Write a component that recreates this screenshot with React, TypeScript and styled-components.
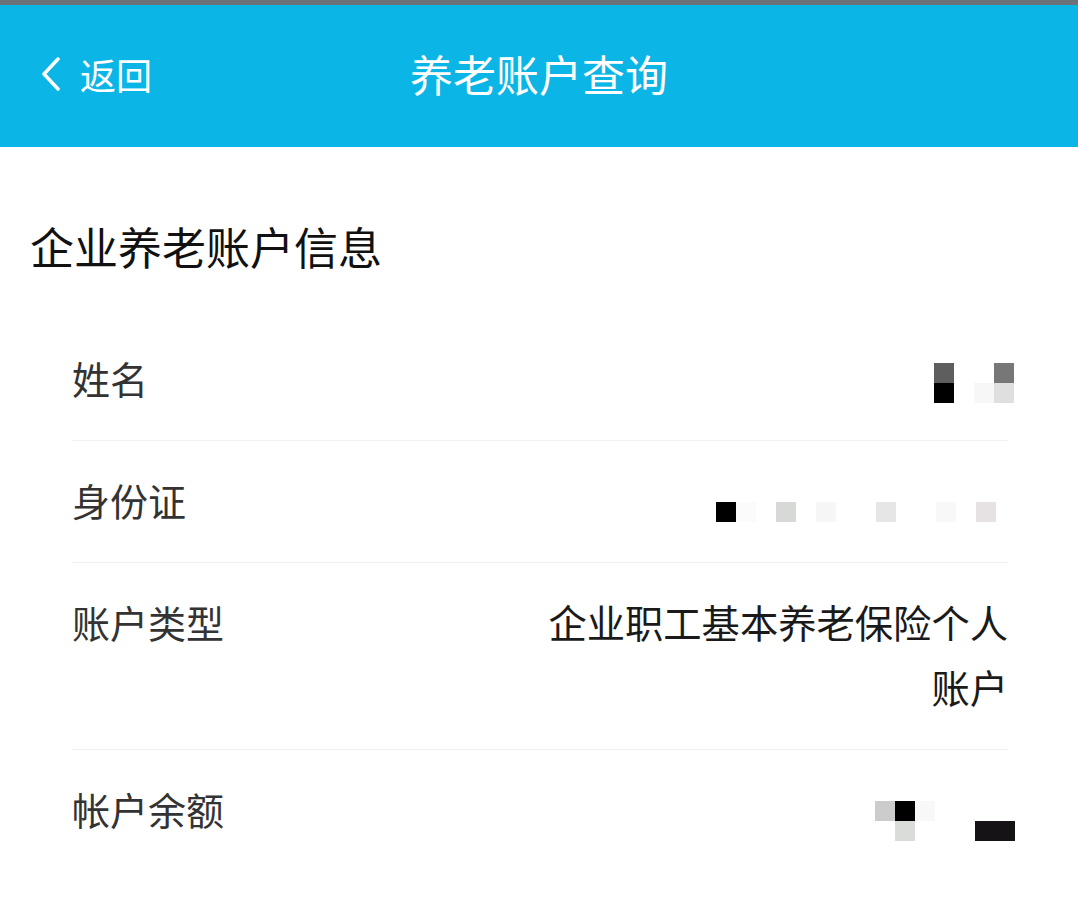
import styled, { createGlobalStyle } from 'styled-components';

const GlobalStyle = createGlobalStyle`
  body {
    margin: 0;
    background: #ffffff;
    font-family: "Noto Sans CJK SC", "Noto Sans", sans-serif;
  }
`;

const Page = styled.div`
  width: 1078px;
  min-height: 908px;
  background: #ffffff;
`;

const StatusStrip = styled.div`
  height: 5px;
  background: #6c7378;
`;

const Header = styled.header`
  height: 142px;
  background: #0bb5e6;
  display: grid;
  grid-template-columns: 1fr auto 1fr;
  align-items: center;
  color: #ffffff;
`;

const BackButton = styled.button`
  justify-self: start;
  display: flex;
  align-items: center;
  gap: 18px;
  padding: 0 0 4px 40px;
  border: 0;
  background: transparent;
  color: #ffffff;
  font-family: inherit;
  font-size: 36px;
  line-height: 50px;
  cursor: pointer;
`;

const Title = styled.h1`
  margin: 0 0 6px;
  font-size: 43px;
  font-weight: 400;
  line-height: 60px;
`;

const Content = styled.main`
  padding-top: 69px;
`;

const SectionTitle = styled.h2`
  margin: 0 0 43px;
  padding-left: 30px;
  font-size: 44px;
  font-weight: 400;
  line-height: 60px;
  color: #111111;
`;

const List = styled.div`
  margin: 0 70px 0 72px;
`;

const Row = styled.div`
  display: flex;
  justify-content: space-between;
  align-items: flex-start;
  padding: 26px 0 30px;
  border-bottom: 1px solid #f1f1f1;
  font-size: 38px;
  line-height: 65px;

  &:last-child {
    border-bottom: 0;
  }
`;

const Label = styled.div`
  flex: none;
  color: #333333;
`;

const Value = styled.div`
  max-width: 470px;
  text-align: right;
  font-size: 38.3px;
  color: #1a1a1a;
`;

const Mosaic = styled.div<{ $cols: number; $top: number; $shift: number }>`
  display: grid;
  grid-template-columns: repeat(${(p) => p.$cols}, 20px);
  grid-auto-rows: 20px;
  margin-top: ${(p) => p.$top}px;
  margin-right: ${(p) => p.$shift}px;
`;

const Cell = styled.div<{ $color: string }>`
  background: ${(p) => p.$color || 'transparent'};
`;

type Grid = string[][];

const nameGrid: Grid = [
  ['#5e5e5e', '', '', '#777777'],
  ['#000000', '', '#f7f7f7', '#e0dfe0'],
];

const idGrid: Grid = [
  ['#000000', '#fbfbfb', '', '#d6d9d6', '', '#f6f6f6', '', '', '#e6e6e6', '', '', '#f8f8f8', '', '#e6e2e4'],
];

const balanceGrid: Grid = [
  ['#cccccc', '#000000', '#f8f8f8', '', '', '', ''],
  ['', '#d9dcd9', '', '', '', '#151315', '#151315'],
];

function Pixels({ grid, top, shift }: { grid: Grid; top: number; shift: number }) {
  return (
    <Mosaic $cols={grid[0].length} $top={top} $shift={shift}>
      {grid.flat().map((c, i) => (
        <Cell key={i} $color={c} />
      ))}
    </Mosaic>
  );
}

function Chevron() {
  return (
    <svg width="22" height="34" viewBox="0 0 22 34" fill="none">
      <polyline
        points="18,2 4,17 18,32"
        stroke="#ffffff"
        strokeWidth="3.5"
        strokeLinecap="round"
        strokeLinejoin="round"
      />
    </svg>
  );
}

function App() {
  return (
    <Page>
      <GlobalStyle />
      <StatusStrip />
      <Header>
        <BackButton>
          <Chevron />
          返回
        </BackButton>
        <Title>养老账户查询</Title>
        <div />
      </Header>

      <Content>
        <SectionTitle>企业养老账户信息</SectionTitle>
        <List>
          <Row>
            <Label>姓名</Label>
            <Pixels grid={nameGrid} top={18} shift={-6} />
          </Row>
          <Row>
            <Label>身份证</Label>
            <Pixels grid={idGrid} top={35} shift={12} />
          </Row>
          <Row>
            <Label>账户类型</Label>
            <Value>企业职工基本养老保险个人账户</Value>
          </Row>
          <Row>
            <Label>帐户余额</Label>
            <Pixels grid={balanceGrid} top={25} shift={-7} />
          </Row>
        </List>
      </Content>
    </Page>
  );
}

export default App;
